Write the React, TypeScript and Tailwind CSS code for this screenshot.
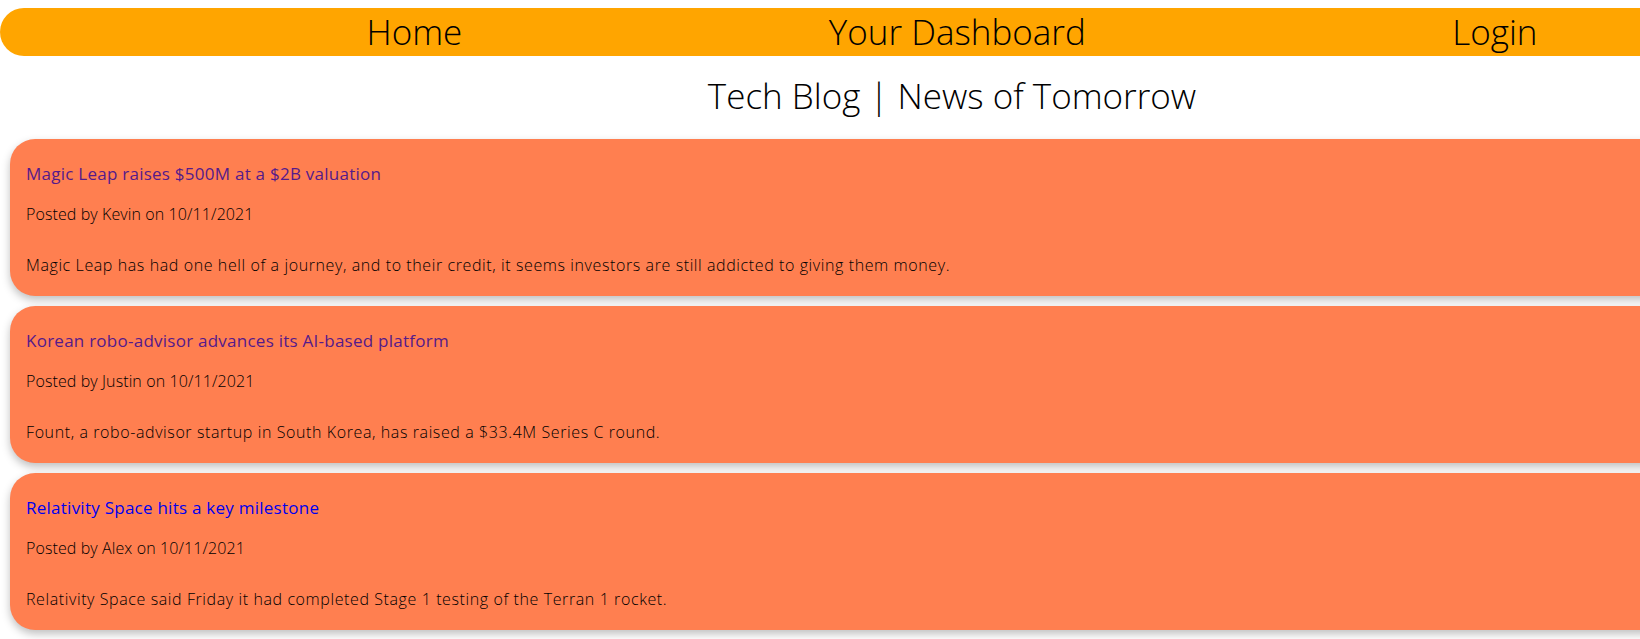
const posts = [
  {
    title: "Magic Leap raises $500M at a $2B valuation",
    author: "Kevin",
    date: "10/11/2021",
    body: "Magic Leap has had one hell of a journey, and to their credit, it seems investors are still addicted to giving them money.",
    visited: true,
  },
  {
    title: "Korean robo-advisor advances its AI-based platform",
    author: "Justin",
    date: "10/11/2021",
    body: "Fount, a robo-advisor startup in South Korea, has raised a $33.4M Series C round.",
    visited: true,
  },
  {
    title: "Relativity Space hits a key milestone",
    author: "Alex",
    date: "10/11/2021",
    body: "Relativity Space said Friday it had completed Stage 1 testing of the Terran 1 rocket.",
    visited: false,
  },
];

export default function App() {
  return (
    <div className="w-full min-h-screen overflow-hidden bg-white font-['Open_Sans',sans-serif] text-black">
      <div className="w-[1904px]">
        {/* Nav */}
        <nav className="mt-2 h-12 rounded-full bg-[#ffa500] flex justify-evenly items-center text-[35px] leading-10 font-light">
          <a href="#">Home</a>
          <a href="#">Your Dashboard</a>
          <a href="#">Login</a>
        </nav>

        <h1 className="mt-5 text-center text-[35px] leading-10 font-light">
          Tech Blog | News of Tomorrow
        </h1>

        {/* Posts */}
        <div className="mt-[23px] mx-[10px] flex flex-col gap-[10px]">
          {posts.map((p) => (
            <div
              key={p.title}
              className="h-[157px] rounded-[25px] bg-[#ff7f50] px-4 pt-[23px] shadow-[0_4px_8px_rgba(0,0,0,0.25)]"
            >
              <a
                href="#"
                className={`block text-[17px] leading-6 tracking-[0.25px] ${p.visited ? "text-[#551a8b]" : "text-[#0000ee]"}`}
              >
                {p.title}
              </a>
              <p className="mt-[18px] text-[16px] leading-5 font-light tracking-[0.1px] text-black">
                Posted by {p.author} on {p.date}
              </p>
              <p className="mt-[31px] text-[16px] leading-5 font-light tracking-[0.6px] text-black">{p.body}</p>
            </div>
          ))}
        </div>
      </div>
    </div>
  );
}
